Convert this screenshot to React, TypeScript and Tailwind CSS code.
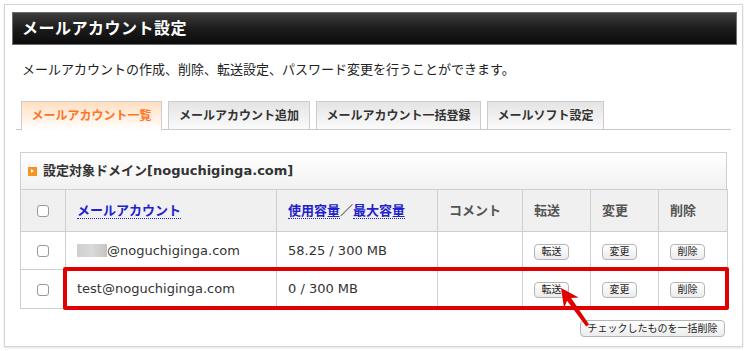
import React from 'react';

const tabs = [
    { label: 'メールアカウント一覧', w: 'w-[141px]', active: true },
    { label: 'メールアカウント追加', w: 'w-[142px]', active: false },
    { label: 'メールアカウント一括登録', w: 'w-[165px]', active: false },
    { label: 'メールソフト設定', w: 'w-[117px]', active: false },
];

const rows = [
    { blurred: true, address: '@noguchiginga.com', usage: '58.25 / 300 MB', h: 'h-[38px]' },
    { blurred: false, address: 'test@noguchiginga.com', usage: '0 / 300 MB', h: 'h-[39px]' },
];

const SmallButton: React.FC<{ label: string }> = ({ label }) => (
    <span className="inline-flex items-center justify-center w-[35px] h-[16px] rounded-[4px] border border-[#b5b5b5] bg-gradient-to-b from-white to-[#ececec] text-[10px] leading-none text-[#222]">
        {label}
    </span>
);

const Checkbox: React.FC = () => (
    <span className="inline-block w-[12px] h-[12px] rounded-[3px] border border-[#9a9a9a] bg-white align-middle" />
);

export default function App() {
    const font = "font-['DejaVu_Sans','Noto_Sans_CJK_JP',sans-serif]";
    const cell = 'border border-[#cfcfcf] px-[11px] text-left';

    return (
        <div className={`relative w-[748px] h-[351px] bg-white overflow-hidden ${font}`}>
            <div className="ml-[4px] mt-[4px] w-[739px] h-[343px] border border-[#d6d6d6] shadow-[0_1px_2px_rgba(0,0,0,0.12)] pl-[7px] pt-[7px]">
                {/* Title bar */}
                <div className="w-[725px] h-[33px] border border-[#6f6f6f] bg-gradient-to-b from-[#3d3d3d] via-[#1c1c1c] to-[#0c0c0c] flex items-center pl-[9px]">
                    <span className="text-white font-bold text-[16px] tracking-[0.5px]">メールアカウント設定</span>
                </div>

                {/* Description */}
                <p className="mt-[16px] pl-[10px] text-[13px] leading-[18px] text-[#222]">
                    メールアカウントの作成、削除、転送設定、パスワード変更を行うことができます。
                </p>

                {/* Tabs */}
                <div className="mt-[22px] ml-[4px] w-[715px] h-[29px] border-b border-[#c8c8c8] flex gap-[6px] pl-[5px]">
                    {tabs.map(t => (
                        <div key={t.label}
                            className={`${t.w} h-[29px] flex items-center justify-center border border-[#cccccc] text-[12px] font-bold ${t.active
                                ? 'bg-gradient-to-b from-[#ffdfc0] to-white text-[#ff7326] border-b-white h-[30px]'
                                : 'bg-gradient-to-b from-[#e4e4e4] to-[#fbfbfb] text-[#333]'}`}>
                            {t.label}
                        </div>
                    ))}
                </div>

                {/* Domain table */}
                <div className="relative mt-[22px] ml-[8px] w-[707px]">
                    <div className="h-[37px] border border-b-0 border-[#cfcfcf] bg-gradient-to-b from-white to-[#f1f1f1] flex items-center pl-[7px] gap-[6px]">
                        <span className="w-[9px] h-[9px] bg-[#f7931e] flex items-center justify-center">
                            <span className="w-0 h-0 border-y-[2.5px] border-y-transparent border-l-[3px] border-l-white" />
                        </span>
                        <span className="text-[13px] font-bold text-[#333]">設定対象ドメイン[noguchiginga.com]</span>
                    </div>
                    <table className="w-[707px] border-collapse table-fixed text-[13px]">
                        <colgroup>
                            <col className="w-[45px]" />
                            <col className="w-[211px]" />
                            <col className="w-[161px]" />
                            <col className="w-[85px]" />
                            <col className="w-[68px]" />
                            <col className="w-[68px]" />
                            <col className="w-[69px]" />
                        </colgroup>
                        <thead>
                            <tr className="h-[42px] bg-[#f0f0f0] font-bold text-[#555]">
                                <th className="border border-[#cfcfcf] text-center"><Checkbox /></th>
                                <th className={cell}>
                                    <span className="text-[#2222cc] border-b border-dotted border-[#2222cc]">メールアカウント</span>
                                </th>
                                <th className={`${cell} whitespace-nowrap`}>
                                    <span className="text-[#2222cc] border-b border-dotted border-[#2222cc]">使用容量</span>
                                    <span className="text-[#333]">／</span>
                                    <span className="text-[#2222cc] border-b border-dotted border-[#2222cc]">最大容量</span>
                                </th>
                                <th className={cell}>コメント</th>
                                <th className={cell}>転送</th>
                                <th className={cell}>変更</th>
                                <th className={cell}>削除</th>
                            </tr>
                        </thead>
                        <tbody className="text-[#333]">
                            {rows.map(r => (
                                <tr key={r.address} className={r.h}>
                                    <td className="border border-[#cfcfcf] text-center"><Checkbox /></td>
                                    <td className={cell}>
                                        <span className="flex items-center">
                                            {r.blurred && <span className="inline-block w-[30px] h-[13px] bg-gradient-to-r from-[#cfcfcf] via-[#dadada] to-[#c4c4c4]" />}
                                            {r.address}
                                        </span>
                                    </td>
                                    <td className={cell}>{r.usage}</td>
                                    <td className={cell}></td>
                                    <td className={cell}><SmallButton label="転送" /></td>
                                    <td className={cell}><SmallButton label="変更" /></td>
                                    <td className={cell}><SmallButton label="削除" /></td>
                                </tr>
                            ))}
                        </tbody>
                    </table>

                    {/* Red highlight */}
                    <div className="absolute left-[43px] top-[115px] w-[666px] h-[43px] border-[4px] border-[#e00000] rounded-[2px]" />

                    <div className="flex justify-end mt-[11px] pr-[2px]">
                        <span className="inline-flex items-center justify-center w-[145px] h-[17px] rounded-[4px] border border-[#b5b5b5] bg-gradient-to-b from-white to-[#ececec] text-[10px] leading-none text-[#222]">
                            チェックしたものを一括削除
                        </span>
                    </div>
                </div>
            </div>

            {/* Arrow */}
            <svg className="absolute left-0 top-0 pointer-events-none" width="748" height="351">
                <g transform="translate(561 288) rotate(-125.4)">
                    <polygon points="0,0 -18,-9 -14,-2.5 -46,-1.8 -46,1.8 -14,2.5 -18,9" fill="#e00000" />
                </g>
            </svg>
        </div>
    );
}
